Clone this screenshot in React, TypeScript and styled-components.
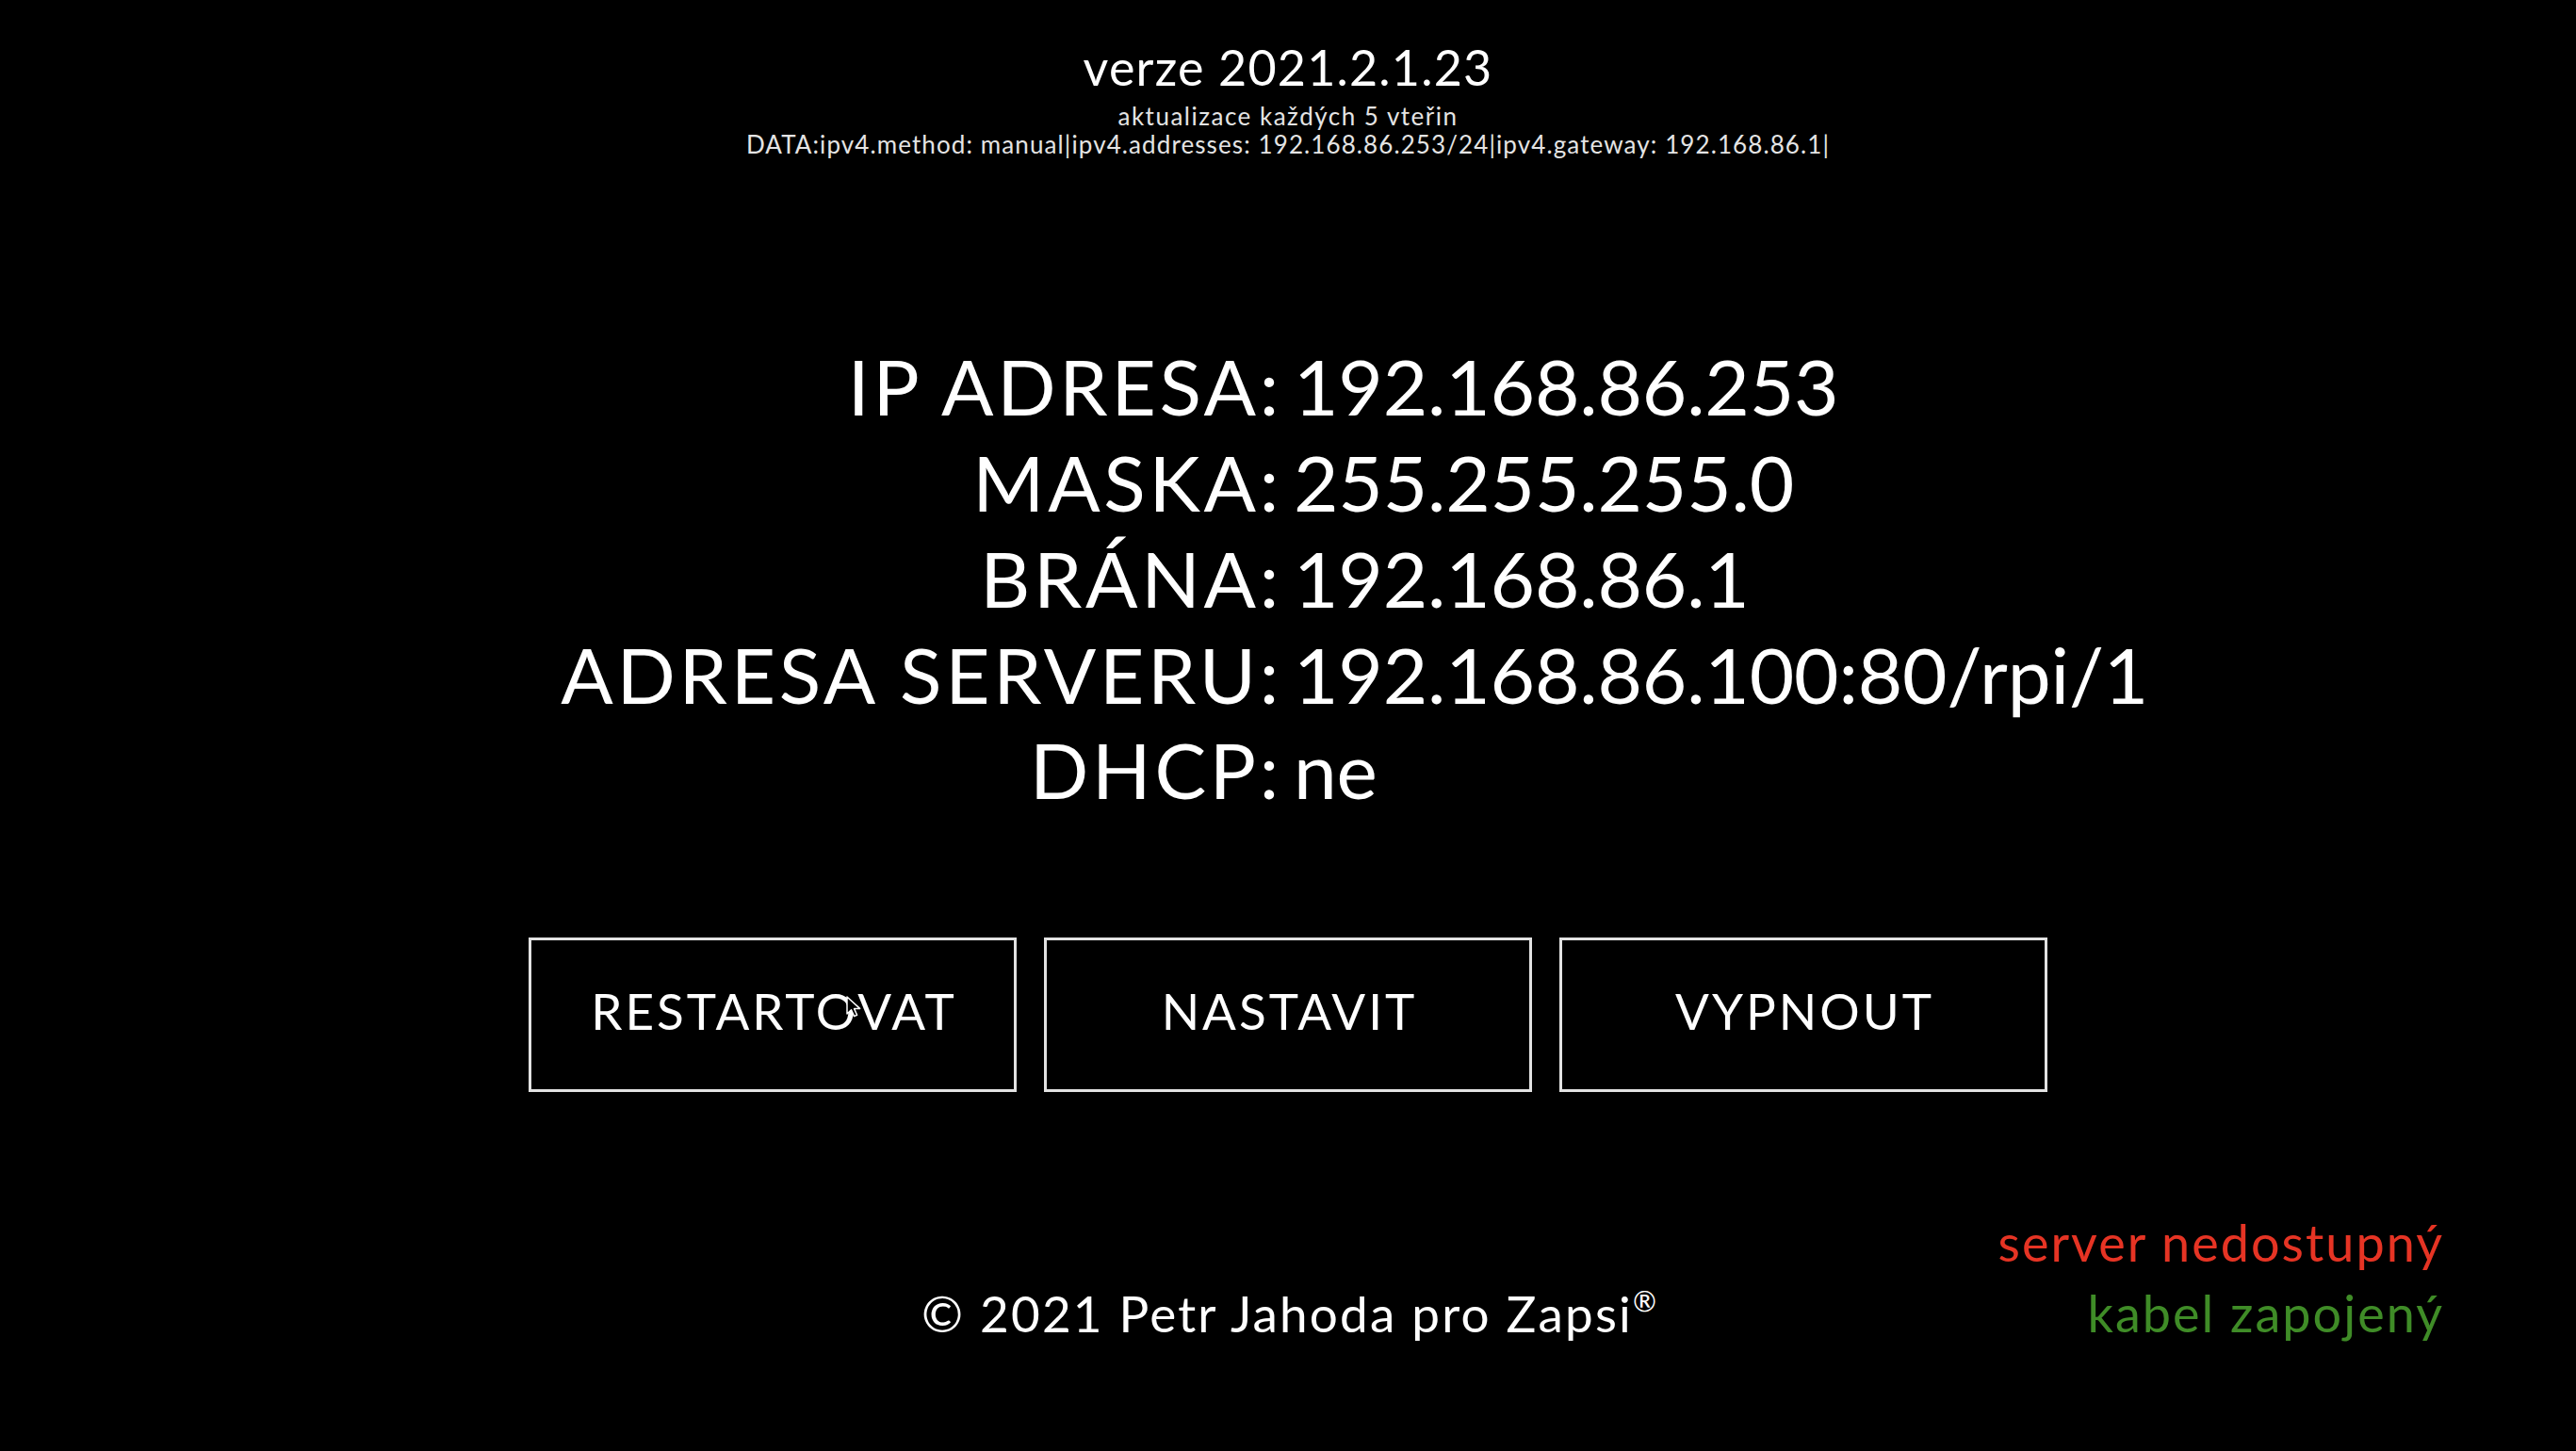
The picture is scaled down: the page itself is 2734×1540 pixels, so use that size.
import React from "react";
import styled, { createGlobalStyle } from "styled-components";

const GlobalStyle = createGlobalStyle`
  html, body {
    margin: 0;
    padding: 0;
    background: #000;
  }
  body {
    font-family: Lato, "Open Sans", "Noto Sans", sans-serif;
    color: #fff;
  }
`;

const Page = styled.div`
  width: 2734px;
  height: 1540px;
  background: #000;
  display: flex;
  flex-direction: column;
  align-items: center;
  padding-top: 40px;
  box-sizing: border-box;
  overflow: hidden;
`;

const Header = styled.header`
  display: flex;
  flex-direction: column;
  align-items: center;
  line-height: 1.2;
`;

const Version = styled.div`
  font-size: 52px;
  letter-spacing: 1.2px;
  margin-bottom: 6px;
`;

const SmallLine = styled.div<{ $spacing: number }>`
  font-size: 26px;
  line-height: 30px;
  letter-spacing: ${(p) => p.$spacing}px;
  color: #e4e4e4;
`;

const InfoGrid = styled.div`
  margin-top: 191px;
  width: 100%;
  display: grid;
  grid-template-columns: 1fr 1fr;
  column-gap: 12px;
  font-size: 82px;
  line-height: 101.75px;
`;

const Label = styled.div`
  text-align: right;
  white-space: nowrap;
  letter-spacing: 3.7px;
`;

const Value = styled.div`
  text-align: left;
  white-space: nowrap;
  letter-spacing: -0.2px;
`;

const ButtonRow = styled.div`
  margin-top: 127px;
  display: flex;
  gap: 29px;
`;

const ActionButton = styled.button`
  position: relative;
  width: 518px;
  height: 164px;
  box-sizing: border-box;
  border: 3px solid #e2e2e2;
  background: #000;
  color: #fff;
  font-family: inherit;
  font-size: 53px;
  letter-spacing: 3px;
  padding: 0 0 10px 3px;
  display: flex;
  align-items: center;
  justify-content: center;
`;

const Cursor = styled.svg`
  position: absolute;
  left: 333px;
  top: 59px;
  width: 20px;
  height: 24px;
`;

const Footer = styled.footer`
  margin-top: 122px;
  width: 100%;
  display: grid;
  grid-template-columns: 1fr auto 1fr;
  align-items: end;
`;

const Copyright = styled.div`
  grid-column: 2;
  font-size: 53px;
  letter-spacing: 2.2px;
  line-height: 74px;
  white-space: nowrap;
  margin-bottom: -3px;
  padding-left: 2px;
`;

const Reg = styled.span`
  font-size: 30px;
  vertical-align: 22px;
  letter-spacing: 0;
`;

const StatusBox = styled.div`
  grid-column: 3;
  justify-self: end;
  margin-right: 140px;
  margin-bottom: -3px;
  display: flex;
  flex-direction: column;
  align-items: flex-end;
  font-size: 54px;
  letter-spacing: 2px;
  line-height: 75px;
`;

const Status = styled.div<{ $tone: "bad" | "good" }>`
  color: ${(p) => (p.$tone === "bad" ? "#e63424" : "#3f8c27")};
  white-space: nowrap;
`;

const rows: [string, string][] = [
  ["IP ADRESA:", "192.168.86.253"],
  ["MASKA:", "255.255.255.0"],
  ["BRÁNA:", "192.168.86.1"],
  ["ADRESA SERVERU:", "192.168.86.100:80/rpi/1"],
  ["DHCP:", "ne"],
];

export default function App() {
  return (
    <>
      <GlobalStyle />
      <Page>
        <Header>
          <Version>verze 2021.2.1.23</Version>
          <SmallLine $spacing={1.5}>aktualizace každých 5 vteřin</SmallLine>
          <SmallLine $spacing={1.1}>
            DATA:ipv4.method: manual|ipv4.addresses: 192.168.86.253/24|ipv4.gateway: 192.168.86.1|
          </SmallLine>
        </Header>
        <InfoGrid>
          {rows.map(([l, v]) => (
            <React.Fragment key={l}>
              <Label>{l}</Label>
              <Value>{v}</Value>
            </React.Fragment>
          ))}
        </InfoGrid>
        <ButtonRow>
          <ActionButton>
            RESTARTOVAT
            <Cursor viewBox="0 0 20 24">
              <path
                d="M2 1 L2 19 L6.5 14.8 L9.6 21.6 L12.6 20.3 L9.6 13.6 L15.6 13.4 Z"
                fill="#000"
                stroke="#fff"
                strokeWidth="1.5"
                strokeLinejoin="round"
              />
            </Cursor>
          </ActionButton>
          <ActionButton>NASTAVIT</ActionButton>
          <ActionButton>VYPNOUT</ActionButton>
        </ButtonRow>
        <Footer>
          <Copyright>
            © 2021 Petr Jahoda pro Zapsi<Reg>®</Reg>
          </Copyright>
          <StatusBox>
            <Status $tone="bad">server nedostupný</Status>
            <Status $tone="good">kabel zapojený</Status>
          </StatusBox>
        </Footer>
      </Page>
    </>
  );
}
